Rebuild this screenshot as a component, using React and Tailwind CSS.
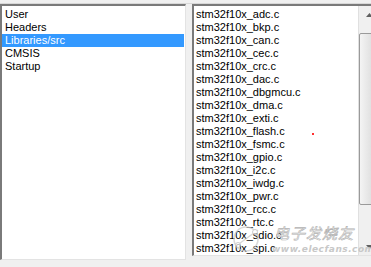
import React from 'react';

const groups = ['User', 'Headers', 'Libraries/src', 'CMSIS', 'Startup'];

const files = [
  'adc', 'bkp', 'can', 'cec', 'crc', 'dac', 'dbgmcu', 'dma', 'exti', 'flash',
  'fsmc', 'gpio', 'i2c', 'iwdg', 'pwr', 'rcc', 'rtc', 'sdio', 'spi', 'tim',
].map(n => `stm32f10x_${n}.c`);

// sunken win32 list box border
const sunken =
  'border-t-2 border-l-2 border-b border-r border-t-[#7a7a7a] border-l-[#7a7a7a] border-b-[#e3e3e3] border-r-[#e3e3e3] bg-white';

export default function App() {
  return (
    <div
      className="relative w-[371px] h-[267px] overflow-hidden bg-[#f0f0f0] text-[11px] leading-[13px] text-black"
      style={{ fontFamily: '"Liberation Sans", Arial, sans-serif' }}
    >
      <div className="h-[4px] border-b border-[#d8d8d8]" />
      <div className="flex gap-[6px]">
        {/* group list */}
        <div className={`w-[186px] h-[256px] shrink-0 pt-[2px] ${sunken}`}>
          {groups.map((g, i) => (
            <div
              key={g}
              className={`h-[13px] pl-[3px] mr-[1px] ${i === 2 ? 'bg-[#3399ff] text-white' : ''}`}
            >
              {g}
            </div>
          ))}
        </div>

        {/* file list */}
        <div className={`w-[184px] h-[252px] flex shrink-0 overflow-hidden ${sunken}`}>
          <div className="flex-1 pt-[2px] pl-[2px] overflow-hidden">
            {files.map(f => (
              <div key={f} className="h-[13px] whitespace-nowrap">{f}</div>
            ))}
          </div>
          <div className="w-[17px] shrink-0 flex flex-col bg-[#f0f0f0] border-l border-[#e0e0e0]">
            <div className="h-[17px] flex items-center justify-start pl-[7px]">
              <svg width="7" height="4" viewBox="0 0 7 4"><path d="M0 4 L3.5 0 L7 4 Z" fill="#606060" /></svg>
            </div>
            <div className="h-[10px]" />
            <div className="h-[172px] border border-[#9a9a9a] rounded-[2px] bg-gradient-to-r from-[#f4f4f4] to-[#dcdcdc]" />
            <div className="flex-1" />
            <div className="h-[17px] flex items-center justify-start pl-[7px]">
              <svg width="7" height="4" viewBox="0 0 7 4"><path d="M0 0 L3.5 4 L7 0 Z" fill="#606060" /></svg>
            </div>
          </div>
        </div>
      </div>

      {/* red speck */}
      <div className="absolute left-[312px] top-[133px] w-[2px] h-[2px] bg-[#ff3030]" />

      {/* watermark */}
      <div className="absolute left-[228px] top-[222px] pointer-events-none">
        <svg width="40" height="34" viewBox="0 0 40 34" className="opacity-70">
          <circle cx="18" cy="17" r="12" fill="none" stroke="#c8c8c8" strokeWidth="1.5" />
          <path d="M8 24 L30 8" stroke="#c8c8c8" strokeWidth="1.5" />
          <circle cx="10" cy="23" r="2.5" fill="white" stroke="#b8b8b8" />
          <circle cx="27" cy="10" r="2.5" fill="white" stroke="#b8b8b8" />
        </svg>
      </div>
      <div
        className="absolute left-[274px] top-[225px] text-[15px] leading-[16px] italic text-white tracking-[1px] pointer-events-none"
        style={{ fontFamily: '"Noto Sans CJK SC", sans-serif', WebkitTextStroke: '0.6px #b0b0b0' }}
      >
        电子发烧友
      </div>
      <div
        className="absolute left-[272px] top-[244px] text-[9px] leading-[10px] italic font-bold text-[#c8c8c8] tracking-[0.5px] pointer-events-none"
        style={{ fontFamily: '"DejaVu Sans", sans-serif' }}
      >
        www.elecfans.com
      </div>
    </div>
  );
}
